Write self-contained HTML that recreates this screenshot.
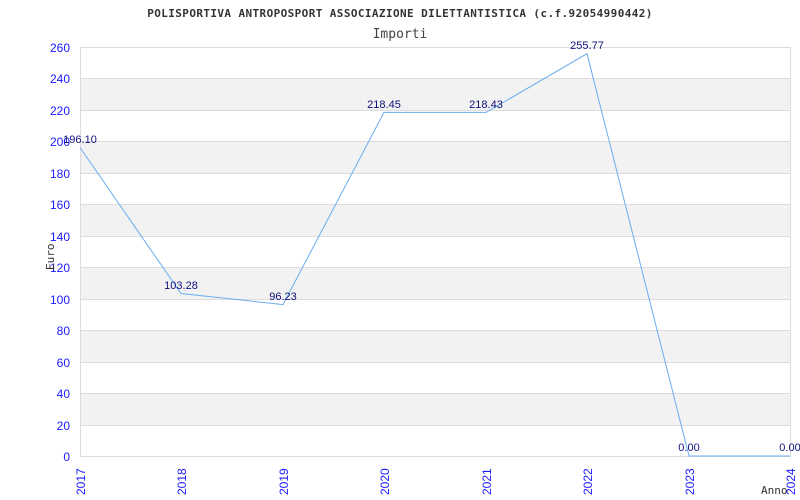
<!DOCTYPE html><html><head><style>body{margin:0;background:#fff}svg{display:block}</style></head><body>
<svg width="800" height="500" xmlns="http://www.w3.org/2000/svg" font-family="Liberation Sans, sans-serif">
<rect width="800" height="500" fill="#fff"/>
<g fill="#f2f2f2">
<rect x="80" y="78" width="710" height="32"/><rect x="80" y="141" width="710" height="32"/><rect x="80" y="204" width="710" height="32"/><rect x="80" y="267" width="710" height="32"/><rect x="80" y="330" width="710" height="32"/><rect x="80" y="393" width="710" height="32"/>
</g>
<g stroke="#dcdcdc" stroke-width="1">
<line x1="80" y1="47.5" x2="790" y2="47.5"/><line x1="80" y1="78.5" x2="790" y2="78.5"/><line x1="80" y1="110.5" x2="790" y2="110.5"/><line x1="80" y1="141.5" x2="790" y2="141.5"/><line x1="80" y1="173.5" x2="790" y2="173.5"/><line x1="80" y1="204.5" x2="790" y2="204.5"/><line x1="80" y1="236.5" x2="790" y2="236.5"/><line x1="80" y1="267.5" x2="790" y2="267.5"/><line x1="80" y1="299.5" x2="790" y2="299.5"/><line x1="80" y1="330.5" x2="790" y2="330.5"/><line x1="80" y1="362.5" x2="790" y2="362.5"/><line x1="80" y1="393.5" x2="790" y2="393.5"/><line x1="80" y1="425.5" x2="790" y2="425.5"/><line x1="80" y1="456.5" x2="790" y2="456.5"/>
<line x1="80.5" y1="47" x2="80.5" y2="457"/><line x1="790.5" y1="47" x2="790.5" y2="457"/>
</g>
<text x="400" y="17" text-anchor="middle" font-family="DejaVu Sans Mono, monospace" font-weight="bold" font-size="11" letter-spacing="0.4" fill="#333">POLISPORTIVA ANTROPOSPORT ASSOCIAZIONE DILETTANTISTICA (c.f.92054990442)</text>
<text x="400" y="38" text-anchor="middle" font-family="DejaVu Sans Mono, monospace" font-size="13" fill="#444">Importi</text>
<g fill="#1a1aff" font-size="12" text-anchor="end">
<text x="70" y="52">260</text><text x="70" y="83">240</text><text x="70" y="115">220</text><text x="70" y="146">200</text><text x="70" y="178">180</text><text x="70" y="209">160</text><text x="70" y="241">140</text><text x="70" y="272">120</text><text x="70" y="304">100</text><text x="70" y="335">80</text><text x="70" y="367">60</text><text x="70" y="398">40</text><text x="70" y="430">20</text><text x="70" y="461">0</text>
</g>
<g fill="#1a1aff" font-size="12">
<text transform="translate(85,495) rotate(-90)">2017</text><text transform="translate(186,495) rotate(-90)">2018</text><text transform="translate(288,495) rotate(-90)">2019</text><text transform="translate(389,495) rotate(-90)">2020</text><text transform="translate(491,495) rotate(-90)">2021</text><text transform="translate(592,495) rotate(-90)">2022</text><text transform="translate(694,495) rotate(-90)">2023</text><text transform="translate(795,495) rotate(-90)">2024</text>
</g>
<text transform="translate(54,270) rotate(-90)" font-family="DejaVu Sans Mono, monospace" font-size="11" fill="#333">Euro</text>
<text x="761" y="494" font-family="DejaVu Sans Mono, monospace" font-size="11" fill="#333">Anno</text>
<polyline fill="none" stroke="#6aaef0" stroke-width="1" points="80,147.5 181,293.5 283,304.6 384,112.4 486,112.4 587,53.7 689,456 790,456"/>
<g fill="#10107a" font-size="11" text-anchor="middle">
<text x="80" y="143">196.10</text><text x="181" y="289">103.28</text><text x="283" y="300">96.23</text><text x="384" y="108">218.45</text><text x="486" y="108">218.43</text><text x="587" y="49">255.77</text><text x="689" y="451">0.00</text><text x="790" y="451">0.00</text>
</g>
</svg>
</body></html>
